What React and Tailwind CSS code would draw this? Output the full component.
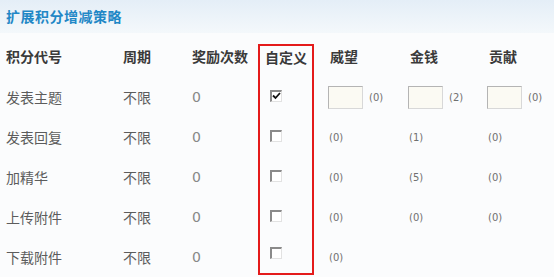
import React from "react";

const rows = [
  { name: "发表主题", period: "不限", times: "0", checked: true, vals: ["(0)", "(2)", "(0)"], inputs: true },
  { name: "发表回复", period: "不限", times: "0", checked: false, vals: ["(0)", "(1)", "(0)"] },
  { name: "加精华", period: "不限", times: "0", checked: false, vals: ["(0)", "(5)", "(0)"] },
  { name: "上传附件", period: "不限", times: "0", checked: false, vals: ["(0)", "(0)", "(0)"] },
  { name: "下载附件", period: "不限", times: "0", checked: false, vals: ["(0)"] },
];

const cjk = { fontFamily: '"Noto Sans CJK SC", "Noto Sans", sans-serif' };

function CheckBox({ checked }) {
  return (
    <span className="relative block w-[12px] h-[12px] bg-white border border-t-2 border-l-2 border-t-[#8a8a8a] border-l-[#8a8a8a] border-r-[#e2e2e2] border-b-[#e2e2e2]">
      {checked && (
        <svg className="absolute left-[0px] top-[0px]" width="9" height="8" viewBox="0 0 9 8">
          <path d="M1 3.5 L3.5 6 L8 1" fill="none" stroke="#111" strokeWidth="1.8" />
        </svg>
      )}
    </span>
  );
}

function Value({ text, input }) {
  return (
    <div className="flex items-center h-full">
      {input && (
        <span className="block w-[35px] h-[23px] mr-[6px] bg-[#fbfaf3] border border-t-[#b4b4b4] border-l-[#b4b4b4] border-r-[#d8d8d8] border-b-[#d8d8d8]" />
      )}
      <span className={`text-[10px] text-[#707070] ${input ? "" : "pl-[1px]"}`} style={{ fontFamily: '"DejaVu Sans", sans-serif' }}>
        {text}
      </span>
    </div>
  );
}

export default function App() {
  const headers = ["积分代号", "周期", "奖励次数"];
  const right = ["威望", "金钱", "贡献"];
  return (
    <div className="w-[554px] h-[277px] overflow-hidden bg-[#fbfcfd]" style={cjk}>
      <div className="h-[33px] px-[6px] flex items-center bg-gradient-to-b from-[#e4eef7] to-[#f4f8fb]">
        <span className="text-[14px] font-bold text-[#1f87c6] tracking-[0.5px]">扩展积分增减策略</span>
      </div>
      <div className="mt-[11px] pl-[6px] grid grid-cols-[117px_69px_66px_56px_14px_80px_79px_1fr] grid-rows-[33px_repeat(5,40px)]">
        {headers.map((h) => (
          <div key={h} className="text-[14px] font-semibold text-[#3a3a3a] leading-[24px]">{h}</div>
        ))}
        <div className="border-2 border-b-0 border-[#e41b1b] pl-[5px] text-[14px] font-semibold text-[#3a3a3a] leading-[22px]">自定义</div>
        <div />
        {right.map((h) => (
          <div key={h} className="text-[14px] font-semibold text-[#3a3a3a] leading-[24px] pl-[2px]">{h}</div>
        ))}
        {rows.map((r, i) => (
          <React.Fragment key={r.name}>
            <div className="flex items-center text-[14px] text-[#5c5c5c]">{r.name}</div>
            <div className="flex items-center text-[14px] text-[#5c5c5c]">{r.period}</div>
            <div className="flex items-center text-[14px] text-[#888]" style={{ fontFamily: '"DejaVu Sans", sans-serif' }}>
              {r.times}
            </div>
            <div
              className={`flex items-center pl-[10px] border-x-2 border-[#e41b1b] ${
                i === rows.length - 1 ? "border-b-2 mb-[2px] pb-[2px]" : ""
              }`}
            >
              <span className="mt-[-2px]">
                <CheckBox checked={r.checked} />
              </span>
            </div>
            <div />
            {[0, 1, 2].map((k) => (
              <div key={k}>{r.vals[k] && <Value text={r.vals[k]} input={r.inputs} />}</div>
            ))}
          </React.Fragment>
        ))}
      </div>
    </div>
  );
}
